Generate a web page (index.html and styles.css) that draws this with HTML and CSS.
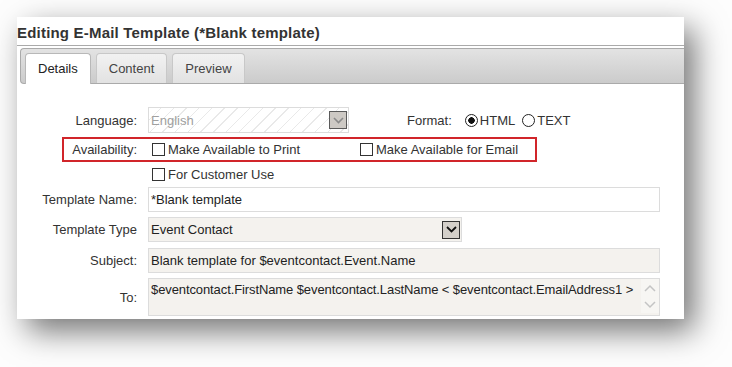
FILE: index.html
```html
<!DOCTYPE html>
<html lang="en">
<head>
  <meta charset="UTF-8" />
  <meta name="viewport" content="width=device-width, initial-scale=1.0" />
  <title>Editing E-Mail Template</title>
  <link rel="stylesheet" href="styles.css">
</head>
<body>
  <div class="panel">
    <h1 class="title">Editing E-Mail Template (*Blank template)</h1>

    <div class="tabs">
      <div class="tab active">Details</div>
      <div class="tab">Content</div>
      <div class="tab">Preview</div>
    </div>

    <div class="form">
      <div class="row row-lang">
        <span class="lbl">Language:</span>
        <div class="select select-lang disabled">
          <span class="value">English</span>
          <span class="arrow">
            <svg width="11" height="7" viewBox="0 0 11 7"><path d="M1 1 L5.5 5.5 L10 1" fill="none" stroke="#8a8a8a" stroke-width="1.6"/></svg>
          </span>
        </div>
        <span class="format-lbl">Format:</span>
        <label class="opt"><input type="radio" name="format" checked>HTML</label>
        <label class="opt"><input type="radio" name="format">TEXT</label>
      </div>

      <div class="avail">
        <span class="lbl">Availability:</span>
        <label class="check check-print"><input type="checkbox">Make Available to Print</label>
        <label class="check"><input type="checkbox">Make Available for Email</label>
      </div>

      <div class="row row-cust">
        <span class="lbl"></span>
        <label class="check"><input type="checkbox">For Customer Use</label>
      </div>

      <div class="row row-name">
        <span class="lbl">Template Name:</span>
        <div class="field wide">*Blank template</div>
      </div>

      <div class="row row-type">
        <span class="lbl">Template Type</span>
        <div class="select select-type">
          <span class="value">Event Contact</span>
          <span class="arrow">
            <svg width="11" height="7" viewBox="0 0 11 7"><path d="M1 1 L5.5 5.5 L10 1" fill="none" stroke="#111" stroke-width="1.8"/></svg>
          </span>
        </div>
      </div>

      <div class="row row-subj">
        <span class="lbl">Subject:</span>
        <div class="field wide beige">Blank template for $eventcontact.Event.Name</div>
      </div>

      <div class="row row-to">
        <span class="lbl">To:</span>
        <div class="field wide beige area">
          <span class="area-text">$eventcontact.FirstName $eventcontact.LastName &lt; $eventcontact.EmailAddress1 &gt;</span>
          <span class="scroll">
            <svg width="12" height="8" viewBox="0 0 12 8"><path d="M1 7 L6 2 L11 7" fill="none" stroke="#c4c4c4" stroke-width="1.5"/></svg>
            <svg width="12" height="8" viewBox="0 0 12 8"><path d="M1 1 L6 6 L11 1" fill="none" stroke="#c4c4c4" stroke-width="1.5"/></svg>
          </span>
        </div>
      </div>
    </div>
  </div>
</body>
</html>
```

FILE: styles.css
```css
html {
  background-color: #fdfdfd;
}
body {
  margin: 0;
  padding-top: 17px;
  min-height: 350px;
  background-color: #fdfdfd;
  font-family: "Liberation Sans", Arial, sans-serif;
  font-size: 13px;
  color: #333;
}
.panel {
  margin-left: 17px;
  width: 667px;
  height: 302px;
  background-color: #ffffff;
  box-shadow: 10px 12px 30px rgba(0, 0, 0, 0.55);
  overflow: hidden;
}
.title {
  margin: 0;
  padding-top: 4px;
  height: 24px;
  line-height: 24px;
  font-size: 15px;
  font-weight: bold;
  letter-spacing: 0.2px;
  color: #333;
  border-bottom: 1px solid #aaaaaa;
}
.tabs {
  display: flex;
  align-items: flex-end;
  gap: 5px;
  margin: 2px 0 0 3px;
  padding-left: 4px;
  height: 34px;
  border: 1px solid #aaaaaa;
  border-right: none;
  border-radius: 4px 0 0 4px;
  background: linear-gradient(#e3e3e3, #cbcbcb);
}
.tab {
  height: 29px;
  line-height: 29px;
  padding: 0 12px;
  border: 1px solid #c8c8c8;
  border-bottom: none;
  border-radius: 4px 4px 0 0;
  background: linear-gradient(#f2f2f2, #e2e2e2);
  color: #444;
}
.tab.active {
  height: 30px;
  margin-bottom: -1px;
  background: #ffffff;
  border-color: #b8b8b8;
  color: #222;
}
.form {
  padding-top: 23px;
}
.row {
  display: flex;
  align-items: center;
}
.lbl {
  width: 120px;
  flex: none;
  text-align: right;
  margin-right: 11px;
  color: #333;
}
.row-lang { height: 26px; }
.row-cust { height: 25px; }
.row-name { height: 25px; }
.row-type { height: 25px; margin-top: 5px; }
.row-subj { height: 25px; margin-top: 6px; }
.row-to { height: 38px; margin-top: 5px; }

.select, .field {
  box-sizing: border-box;
  height: 25px;
  border: 1px solid #dcdcdc;
  padding-left: 2px;
  display: flex;
  align-items: center;
  color: #222;
}
.select-lang {
  width: 201px;
  height: 26px;
  background: repeating-linear-gradient(135deg, #ffffff 0 8px, #e9e9e9 8px 9px);
}
.select.disabled .value {
  color: #a0a0a0;
}
.select-type {
  width: 314px;
  background-color: #f4f2ee;
}
.select .value {
  flex: 1;
}
.arrow {
  box-sizing: border-box;
  width: 18px;
  height: 18px;
  margin-right: 1px;
  display: flex;
  align-items: center;
  justify-content: center;
  background-color: #d4d0ca;
  border: 1px solid #333;
}
.disabled .arrow {
  background-color: #cdc9c4;
  border-color: #5a5a5a;
}
.format-lbl {
  margin-left: 58px;
  margin-right: 13px;
}
.opt {
  display: flex;
  align-items: center;
  margin-right: 7px;
}
.opt input {
  appearance: none;
  box-sizing: border-box;
  width: 13px;
  height: 13px;
  margin: 0 2px 0 0;
  border: 1px solid #222;
  border-radius: 50%;
  background: #fff;
}
.opt input:checked {
  background: radial-gradient(circle, #111 0 3px, #fff 3.5px);
}
.avail {
  box-sizing: border-box;
  display: flex;
  align-items: center;
  margin: 4px 0 0 45px;
  width: 475px;
  height: 25px;
  border: 2px solid #d1252a;
}
.avail .lbl {
  width: 73px;
}
.check {
  display: flex;
  align-items: center;
}
.check input {
  appearance: none;
  box-sizing: border-box;
  width: 13px;
  height: 13px;
  margin: 0 3px 0 4px;
  border: 1px solid #333;
  background: #fff;
}
.check-print {
  width: 208px;
}
.wide {
  width: 512px;
}
.beige {
  background-color: #f4f2ee;
}
.field.area {
  height: 38px;
  align-items: flex-start;
  padding-top: 3px;
  padding-right: 0;
}
.area-text {
  flex: 1;
  letter-spacing: -0.1px;
}
.scroll {
  width: 18px;
  height: 34px;
  margin-top: -3px;
  display: flex;
  flex-direction: column;
  align-items: center;
  justify-content: space-around;
  background-color: #f7f6f3;
}
```
